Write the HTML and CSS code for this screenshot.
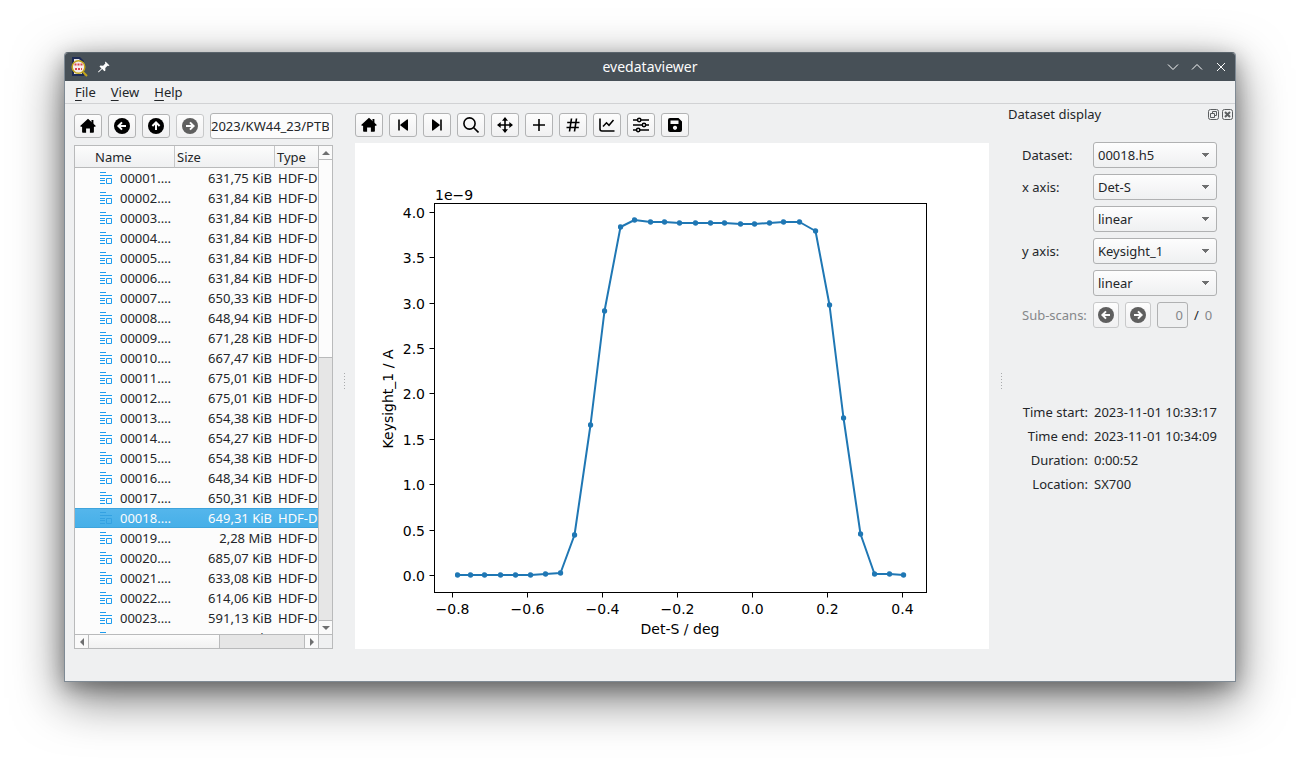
FILE: index.html
```html
<!DOCTYPE html>
<html lang="en">
<head>
    <meta charset="UTF-8">
    <meta name="viewport" content="width=device-width, initial-scale=1.0">
    <title>evedataviewer</title>
    <link rel="stylesheet" href="styles.css">
</head>
<body>

<!-- shared icons -->
<svg class="defs" width="0" height="0">
    <symbol id="home" viewBox="0 0 16 16"><path d="M8 .8 15.600 7.700Q15.900 8.800 15 8.800H13.900V14Q13.900 14.800 13.100 14.800H9.900V10.600H6.100V14.800H2.900Q2.100 14.800 2.100 14V8.800H1Q.1 8.800.4 7.700Z" fill="currentColor"/><path d="M11.500 2h1.900v4h-1.900z" fill="currentColor"/></symbol>
    <symbol id="left" viewBox="0 0 16 16"><circle cx="8" cy="8" r="8" fill="currentColor"/><path d="M12 8H4.800M8 4.400 4.400 8 8 11.600" fill="none" stroke="#fcfcfc" stroke-width="2"/></symbol>
    <symbol id="up" viewBox="0 0 16 16"><circle cx="8" cy="8" r="8" fill="currentColor"/><path d="M8 12V4.800M4.400 8 8 4.400 11.600 8" fill="none" stroke="#fcfcfc" stroke-width="2"/></symbol>
    <symbol id="right" viewBox="0 0 16 16"><circle cx="8" cy="8" r="8" fill="currentColor"/><path d="M4 8h7.200M8 4.400 11.600 8 8 11.600" fill="none" stroke="#fcfcfc" stroke-width="2"/></symbol>
    <symbol id="file" viewBox="0 0 12 12"><path d="M0 .5h6M0 3.500h12M0 6.500h5M0 8.500h5M0 11.500h5M6.500 6.500h5v5h-5z" fill="none" stroke="currentColor"/></symbol>
</svg>

<div class="window">
    <header class="titlebar">
        <div class="title-left">
            <svg width="18" height="20" viewBox="0 0 18 20">
                <path d="M2 0h8l4 4v15H2z" fill="#1d2a55"/>
                <path d="M4 2h5l3 3v12H4z" fill="#e8e6ec"/>
                <circle cx="8.500" cy="10" r="6.300" fill="#f6ecec" stroke="#c0a51c" stroke-width="1.500"/>
                <path d="M4.500 7.500h2M7.500 7.500h2M10.500 7.500h2M5 12h2M8 12h2M11 12h1" stroke="#d8454f" stroke-width="2"/>
                <path d="m13 15 4 4" stroke="#c4a51c" stroke-width="2"/>
            </svg>
            <svg width="12" height="12" viewBox="0 0 12 12"><path d="m7.500.5 4 4-1.200.5-.8-.2L7.300 7l.1 2.400-1 .9-2.200-2.200L.8 11.200H.2v-.8L3.500 7.500 1.500 5.400l.9-.9 2.700.2 2.200-2.200-.3-1z" fill="#fcfcfc"/></svg>
        </div>
        <h1>evedataviewer</h1>
        <div class="title-right">
            <button type="button" aria-label="Minimize"><svg width="12" height="12" viewBox="0 0 12 12"><path d="m1 3.500 5 5 5-5"/></svg></button>
            <button type="button" aria-label="Maximize"><svg width="12" height="12" viewBox="0 0 12 12"><path d="m1 8.500 5-5 5 5"/></svg></button>
            <button type="button" aria-label="Close"><svg width="12" height="12" viewBox="0 0 12 12"><path d="m2 2 8 8M10 2l-8 8"/></svg></button>
        </div>
    </header>

    <nav class="menubar">
        <button type="button"><u>F</u>ile</button>
        <button type="button"><u>V</u>iew</button>
        <button type="button"><u>H</u>elp</button>
    </nav>

    <main>
        <section class="browser">
            <div class="pathbar">
                <button class="tool" type="button" aria-label="Home"><svg width="16" height="16"><use href="#home"/></svg></button>
                <button class="tool" type="button" aria-label="Back"><svg width="16" height="16"><use href="#left"/></svg></button>
                <button class="tool" type="button" aria-label="Up"><svg width="16" height="16"><use href="#up"/></svg></button>
                <button class="tool" type="button" aria-label="Forward" disabled><svg width="16" height="16"><use href="#right"/></svg></button>
                <input class="path" type="text" aria-label="Path" value="2023/KW44_23/PTB">
            </div>
            <div class="tree">
                <div class="tree-view">
                    <table>
                        <thead>
                            <tr><th>Name</th><th>Size</th><th>Type</th></tr>
                        </thead>
                        <tbody id="files"></tbody>
                    </table>
                </div>
                <div class="scroll vertical">
                    <span class="arrow"><svg width="8" height="4" viewBox="0 0 8 4"><path d="M0 4 4 0l4 4z"/></svg></span>
                    <div class="track"><div class="handle"></div></div>
                    <span class="arrow"><svg width="8" height="4" viewBox="0 0 8 4"><path d="m0 0 4 4 4-4z"/></svg></span>
                </div>
                <div class="scroll horizontal">
                    <span class="arrow"><svg width="4" height="8" viewBox="0 0 4 8"><path d="M4 0 0 4l4 4z"/></svg></span>
                    <div class="track"><div class="handle"></div></div>
                    <span class="arrow"><svg width="4" height="8" viewBox="0 0 4 8"><path d="m0 0 4 4-4 4z"/></svg></span>
                </div>
                <div class="corner"></div>
            </div>
        </section>

        <div class="splitter"><i></i></div>

        <section class="plot">
            <div class="toolbar">
                <button class="tool" type="button" aria-label="Home"><svg width="16" height="16"><use href="#home"/></svg></button>
                <button class="tool" type="button" aria-label="Previous"><svg width="16" height="16" viewBox="0 0 16 16"><path d="M4 2.500v11" stroke="currentColor" stroke-width="1.600"/><path d="M13 3v10q0 1-1 .5L5.500 8.500q-.5-.5 0-1L12 2.500q1-.5 1 .5z" fill="currentColor"/></svg></button>
                <button class="tool" type="button" aria-label="Next"><svg width="16" height="16" viewBox="0 0 16 16"><path d="M12 2.500v11" stroke="currentColor" stroke-width="1.600"/><path d="M3 3v10q0 1 1 .5l6.500-5q.5-.5 0-1L4 2.500Q3 2 3 3z" fill="currentColor"/></svg></button>
                <button class="tool" type="button" aria-label="Zoom"><svg width="16" height="16" viewBox="0 0 16 16" fill="none" stroke="currentColor" stroke-width="1.600"><circle cx="6.500" cy="6.500" r="5.600"/><path d="m10.500 10.500 5 5"/></svg></button>
                <button class="tool" type="button" aria-label="Pan"><svg width="16" height="16" viewBox="0 0 16 16"><path d="M8 2v12M2 8h12" stroke="currentColor" stroke-width="1.600"/><path d="m8 0 3 3.700H5zM8 16l3-3.700H5zM0 8l3.700-3v6zM16 8l-3.700-3v6z" fill="currentColor"/></svg></button>
                <button class="tool" type="button" aria-label="Crosshair"><svg width="16" height="16" viewBox="0 0 16 16"><path d="M8 2v12M2 8h12" stroke="currentColor" stroke-width="1.600"/></svg></button>
                <button class="tool" type="button" aria-label="Grid"><svg width="16" height="16" viewBox="0 0 16 16"><path d="M6.500 1.500 4.500 14.500M11.500 1.500l-2 13M2.200 5.500h12.300M1.500 10.500h12.300" stroke="currentColor" stroke-width="1.600"/></svg></button>
                <button class="tool" type="button" aria-label="Axes"><svg width="16" height="16" viewBox="0 0 16 16" fill="none" stroke="currentColor" stroke-width="1.600"><path d="M1 1.500V12q0 2 2 2h12.500"/><path d="m4 9.500 3.500-3.700 2.500 2.500L14.500 3" stroke-width="1.500"/></svg></button>
                <button class="tool" type="button" aria-label="Settings"><svg width="16" height="16" viewBox="0 0 16 16" fill="none" stroke="currentColor" stroke-width="1.500"><path d="M0 3h4.500M8 3h8M0 8h9M13 8h3M0 13h3.500M7 13h9"/><circle cx="6.200" cy="3" r="1.700"/><circle cx="11" cy="8" r="1.700"/><circle cx="5.200" cy="13" r="1.700"/></svg></button>
                <button class="tool" type="button" aria-label="Save"><svg width="16" height="16" viewBox="0 0 16 16"><path fill-rule="evenodd" d="M3 1h8.500L15 4.500V13q0 2-2 2H3q-2 0-2-2V3q0-2 2-2zM3.500 3.500V7h8V3.500zM8 8.700a2.100 2.100 0 1 0 .01 0z" fill="currentColor"/></svg></button>
            </div>
            <svg class="chart" viewBox="0 0 634 506" role="img" aria-label="Keysight_1 over Det-S">
                <defs>
                    <marker id="dot" markerUnits="userSpaceOnUse" markerWidth="6" markerHeight="6" refX="3" refY="3"><circle cx="3" cy="3" r="2.700"/></marker>
                </defs>
                <rect class="axis" x="79.500" y="60.500" width="492" height="389"/>
                <g id="ticks"></g>
                <text x="80" y="57">1e−9</text>
                <text class="mid" x="325" y="491">Det-S / deg</text>
                <text class="mid" transform="translate(38 256) rotate(-90)">Keysight_1 / A</text>
                <polyline id="curve"/>
            </svg>
        </section>

        <div class="splitter right"><i></i></div>

        <aside class="dock">
            <div class="dock-title">
                <h2>Dataset display</h2>
                <button type="button" aria-label="Float"><svg width="11" height="11" viewBox="0 0 11 11"><rect x=".5" y=".5" width="10" height="10" rx="2"/><path d="M4.500 4.500v-2h4v4h-2M2.500 4.500h4v4h-4z"/></svg></button>
                <button type="button" aria-label="Close dock"><svg width="11" height="11" viewBox="0 0 11 11"><rect x=".5" y=".5" width="10" height="10" rx="2"/><path d="m3 3 5 5M8 3 3 8" stroke-width="2"/></svg></button>
            </div>
            <form class="options">
                <label for="dataset">Dataset:</label>
                <select id="dataset"><option>00018.h5</option></select>
                <label for="xaxis">x axis:</label>
                <select id="xaxis"><option>Det-S</option></select>
                <select class="scale" aria-label="x scale"><option>linear</option></select>
                <label for="yaxis">y axis:</label>
                <select id="yaxis"><option>Keysight_1</option></select>
                <select class="scale" aria-label="y scale"><option>linear</option></select>
                <label class="off" for="subscan">Sub-scans:</label>
                <div class="subscans">
                    <button class="tool square" type="button" aria-label="Previous scan" disabled><svg width="16" height="16"><use href="#left"/></svg></button>
                    <button class="tool square" type="button" aria-label="Next scan" disabled><svg width="16" height="16"><use href="#right"/></svg></button>
                    <input id="subscan" type="text" value="0" disabled>
                    <span>/</span>
                    <span class="off">0</span>
                </div>
            </form>
            <dl class="info">
                <dt>Time start:</dt><dd>2023-11-01 10:33:17</dd>
                <dt>Time end:</dt><dd>2023-11-01 10:34:09</dd>
                <dt>Duration:</dt><dd>0:00:52</dd>
                <dt>Location:</dt><dd>SX700</dd>
            </dl>
        </aside>
    </main>
</div>

<script>
    const sizes = [
        '631,75 KiB', '631,84 KiB', '631,84 KiB', '631,84 KiB', '631,84 KiB', '631,84 KiB',
        '650,33 KiB', '648,94 KiB', '671,28 KiB', '667,47 KiB', '675,01 KiB', '675,01 KiB',
        '654,38 KiB', '654,27 KiB', '654,38 KiB', '648,34 KiB', '650,31 KiB', '649,31 KiB',
        '2,28 MiB', '685,07 KiB', '633,08 KiB', '614,06 KiB', '591,13 KiB', '591,13 KiB'
    ];
    const selected = 18;

    document.getElementById('files').innerHTML = sizes.map((size, i) => {
        const name = String(i + 1).padStart(5, '0') + '.…';
        const cls = i + 1 === selected ? ' class="selected"' : '';
        return `<tr${cls}><td><svg width="12" height="12"><use href="#file"/></svg>${name}</td><td>${size}</td><td>HDF-D</td></tr>`;
    }).join('');

    // [x, y] in plot pixels
    const points = [
        [102, 432], [115, 432], [129, 432], [145, 432], [160, 432], [175, 432], [190, 431], [205, 430],
        [219, 392], [235, 282], [249, 168], [265, 84], [279, 77], [295, 79], [309, 79], [324, 80],
        [340, 80], [355, 80], [369, 80], [385, 81], [399, 81], [414, 80], [428, 79], [444, 79],
        [460, 88], [474, 162], [488, 275], [505, 391], [519, 431], [534, 431], [548, 432]
    ];
    document.getElementById('curve').setAttribute('points',
        points.map(([x, y]) => `${x + 0.5},${y}`).join(' '));

    let ticks = '';
    for (let i = 0; i < 9; i++) {
        const y = 432 - Math.round(i * 45.375) + 0.5;
        ticks += `<path d="M74.5 ${y}h5"/><text class="end" x="70" y="${y + 5}">${(i * 0.5).toFixed(1)}</text>`;
    }
    for (let i = 0; i < 7; i++) {
        const x = 97.5 + i * 75;
        const label = ((i - 4) * 0.2).toFixed(1).replace('-', '−');
        ticks += `<path d="M${x} 449.5v5"/><text class="mid" x="${x}" y="471">${label}</text>`;
    }
    document.getElementById('ticks').innerHTML = ticks;
</script>

</body>
</html>
```

FILE: styles.css
```css
* {
    box-sizing: border-box;
}
body {
    margin: 0;
    height: 100vh;
    padding: 52px 64px 76px;
    background: #fff;
    color: #232629;
    font: 13px/20px "Noto Sans", sans-serif;
}
button, input, select {
    font: inherit;
    color: inherit;
    margin: 0;
}
button {
    padding: 0;
    border: none;
    background: none;
}
svg {
    display: block;
}
.defs {
    position: absolute;
}
.window {
    display: flex;
    flex-direction: column;
    height: 100%;
    overflow: hidden;
    background: #eff0f1;
    border: 1px solid #7f8a94;
    border-top-color: #5a646c;
    border-radius: 4px 4px 0 0;
    box-shadow: 0 16px 50px rgba(0, 0, 0, 0.55), 0 6px 20px rgba(0, 0, 0, 0.3);
}

/* title bar and menu */
.titlebar {
    display: grid;
    grid-template-columns: 1fr auto 1fr;
    align-items: center;
    height: 28px;
    padding: 0 8px 0 5px;
    background: #475057;
    color: #fcfcfc;
}
.titlebar h1 {
    margin: 0;
    padding-left: 3px;
    font-size: 14px;
    font-weight: normal;
}
.title-left {
    display: flex;
    align-items: center;
    gap: 10px;
}
.title-right {
    display: flex;
    justify-content: flex-end;
    gap: 12px;
}
.title-right path {
    fill: none;
    stroke: #fcfcfc;
}
.menubar {
    display: flex;
    gap: 15px;
    height: 23px;
    padding: 0 10px;
    border-bottom: 1px solid #d1d2d4;
}
.menubar u {
    text-underline-offset: 3px;
}

main {
    flex: 1;
    min-height: 0;
    display: grid;
    grid-template-columns: 259px 22px 1fr 19px 227px;
    padding: 0 0 32px 9px;
}
.tool {
    display: flex;
    align-items: center;
    justify-content: center;
    width: 28px;
    height: 24px;
    flex: none;
    color: #000;
    border: 1px solid #b2b3b4;
    border-radius: 3px;
    background: linear-gradient(#fdfdfd, #f0f0f1);
}
.tool:disabled {
    color: #5f5f5f;
    border-color: #c8c9ca;
}
.square {
    width: 26px;
    height: 26px;
}

/* file browser */
.browser {
    display: flex;
    flex-direction: column;
    gap: 6px;
    padding-top: 9px;
    min-height: 0;
}
.pathbar {
    display: flex;
    align-items: center;
    gap: 6px;
}
.path {
    flex: 1;
    min-width: 0;
    height: 26px;
    padding: 0 3px 0 0;
    text-align: right;
    background: #fcfcfc;
    border: 1px solid #b2b3b4;
    border-radius: 3px;
}
.tree {
    flex: 1;
    min-height: 0;
    display: grid;
    grid-template-columns: 1fr 14px;
    grid-template-rows: minmax(0, 1fr) 14px;
    background: #fcfcfc;
    border: 1px solid #b9babb;
}
.tree-view {
    overflow: hidden;
}
.tree table {
    width: 100%;
    table-layout: fixed;
    border-collapse: separate;
    border-spacing: 0;
}
.tree th {
    height: 22px;
    padding: 0 2px;
    text-align: left;
    font-weight: normal;
    background: linear-gradient(#fcfcfc, #eff0f1);
    border-right: 1px solid #c5c6c7;
    border-bottom: 1px solid #b9babb;
}
.tree th:nth-child(-n+2) {
    width: 100px;
}
.tree th:first-child {
    padding-left: 20px;
}
.tree th:last-child {
    border-right: none;
}
.tree td {
    height: 20px;
    padding: 0;
    white-space: nowrap;
}
.tree td:first-child {
    display: flex;
    align-items: center;
    gap: 8px;
    padding-left: 25px;
}
.tree td svg {
    color: #1d9cee;
}
.tree .selected svg {
    color: #34a2e2;
}
.tree td:nth-child(2) {
    text-align: right;
    padding-right: 3px;
}
.tree td:last-child {
    padding-left: 3px;
}
.selected td {
    color: #fcfcfc;
    background: linear-gradient(#55b6ec, #45afe8);
    box-shadow: inset 0 1px #3ea4dc, inset 0 -1px #3ea4dc;
}
.scroll {
    display: flex;
    background: #e6e6e6;
}
.arrow {
    display: flex;
    align-items: center;
    justify-content: center;
    width: 13px;
    height: 13px;
    background: #fafafa;
}
.arrow path {
    fill: #6e6f70;
}
.track {
    flex: 1;
}
.handle {
    background: #fcfcfc;
}
.vertical {
    flex-direction: column;
    border-left: 1px solid #b9babb;
}
.vertical .track {
    border: solid #b9babb;
    border-width: 1px 0;
}
.vertical .handle {
    height: 43%;
    border-bottom: 1px solid #b9babb;
}
.horizontal {
    border-top: 1px solid #b9babb;
}
.horizontal .track {
    border: solid #b9babb;
    border-width: 0 1px;
}
.horizontal .handle {
    width: 61%;
    height: 100%;
    border-right: 1px solid #b9babb;
    background: linear-gradient(#fcfcfc, #f1f1f1);
}
.corner {
    background: #eff0f1;
    border: solid #b9babb;
    border-width: 1px 0 0 1px;
}

.splitter {
    display: flex;
    align-items: center;
    justify-content: center;
    padding-top: 9px;
}
.splitter.right {
    padding-left: 6px;
}
.splitter i {
    width: 1px;
    height: 16px;
    background: repeating-linear-gradient(#a9abad 0 1px, transparent 1px 3px);
}

/* plot */
.plot {
    display: flex;
    flex-direction: column;
    gap: 6px;
    padding-top: 9px;
    min-width: 0;
    min-height: 0;
}
.toolbar {
    display: flex;
    gap: 6px;
}
.chart {
    flex: 1;
    width: 100%;
    min-height: 0;
    background: #fff;
    font: 14px "DejaVu Sans", sans-serif;
}
.chart text {
    fill: #000;
}
.chart .mid {
    text-anchor: middle;
}
.chart .end {
    text-anchor: end;
}
.axis, #ticks path {
    fill: none;
    stroke: #000;
}
#curve {
    fill: none;
    stroke: #1f77b4;
    stroke-width: 2;
    stroke-linejoin: round;
    marker: url(#dot);
}
#dot circle {
    fill: #1f77b4;
}

/* dataset dock */
.dock-title {
    display: flex;
    align-items: center;
    gap: 3px;
    padding-right: 2px;
    height: 20px;
}
.dock-title h2 {
    flex: 1;
    margin: 0;
    font-size: 13px;
    font-weight: normal;
}
.dock-title svg {
    fill: none;
    stroke: #5c5f61;
}
.options {
    display: grid;
    grid-template-columns: 65px 1fr;
    grid-auto-rows: 26px;
    align-items: center;
    gap: 6px;
    padding: 18px 18px 0 14px;
}
.options select {
    appearance: none;
    height: 26px;
    padding: 0 4px;
    border: 1px solid #b0b1b2;
    border-radius: 3px;
    background:
        linear-gradient(to bottom left, #6e6f70 50%, transparent 50%) right 10px center / 4px 4px no-repeat,
        linear-gradient(to bottom right, #6e6f70 50%, transparent 50%) right 6px center / 4px 4px no-repeat,
        linear-gradient(#fdfdfd, #eff0f1);
}
.options .scale {
    grid-column: 2;
}
.off {
    color: #85878a;
}
.options label {
    white-space: nowrap;
}
.subscans {
    display: flex;
    align-items: center;
    gap: 6px;
}
.subscans input {
    width: 31px;
    height: 26px;
    padding: 0 4px;
    text-align: right;
    color: #85878a;
    background: #eff0f1;
    border: 1px solid #b0b1b2;
    border-radius: 3px;
}
.info {
    display: grid;
    grid-template-columns: 66px 1fr;
    column-gap: 6px;
    margin: 72px 18px 0 14px;
    line-height: 24px;
    white-space: nowrap;
}
.info dt {
    text-align: right;
}
.info dd {
    margin: 0;
}
```
